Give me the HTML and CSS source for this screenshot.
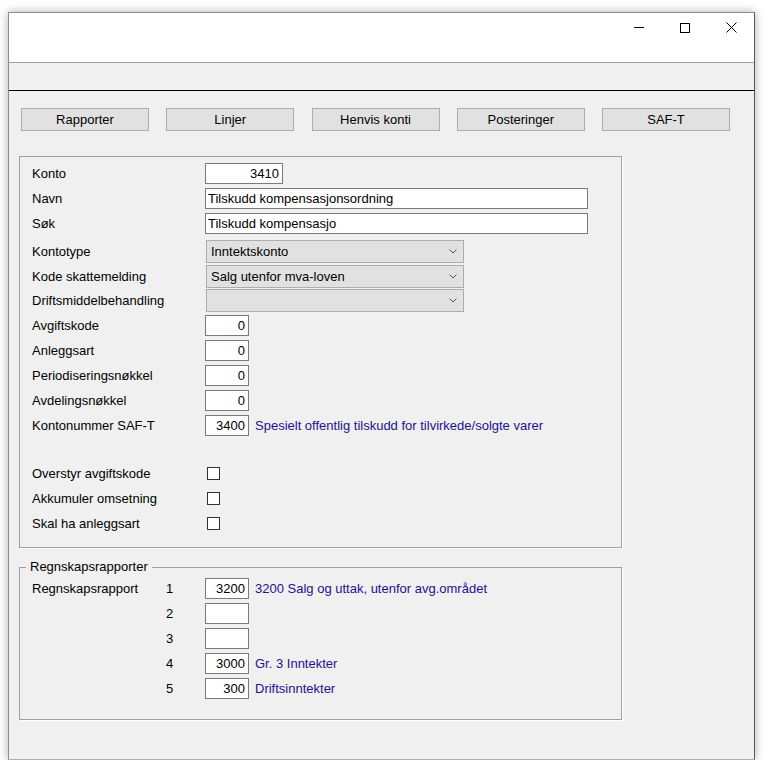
FILE: index.html
```html
<!DOCTYPE html>
<html lang="no">
<head>
<meta charset="utf-8">
<title>Konto</title>
<link rel="stylesheet" href="styles.css">
</head>
<body>
<div class="window">
  <div class="titlebar">
    <div class="cap-btn"><svg width="10" height="10" viewBox="0 0 10 10"><line x1="0" y1="4.5" x2="10" y2="4.5" stroke="#000" stroke-width="1"/></svg></div>
    <div class="cap-btn"><svg width="10" height="10" viewBox="0 0 10 10"><rect x="0.5" y="0.5" width="9" height="9" fill="none" stroke="#000" stroke-width="1"/></svg></div>
    <div class="cap-btn"><svg width="11" height="11" viewBox="0 0 11 11"><path d="M0.5 0.5 L10.5 10.5 M10.5 0.5 L0.5 10.5" stroke="#000" stroke-width="1" fill="none"/></svg></div>
  </div>
  <div class="menubar"></div>
  <div class="client">
    <div class="toolbar">
      <div class="btn">Rapporter</div>
      <div class="btn">Linjer</div>
      <div class="btn">Henvis konti</div>
      <div class="btn">Posteringer</div>
      <div class="btn">SAF-T</div>
    </div>

    <div class="group main">
      <div class="row"><span class="lbl">Konto</span><span class="field num w-konto">3410</span></div>
      <div class="row"><span class="lbl">Navn</span><span class="field w-wide">Tilskudd kompensasjonsordning</span></div>
      <div class="row"><span class="lbl">Søk</span><span class="field w-wide">Tilskudd kompensasjo</span></div>
      <div class="row sel first-sel"><span class="lbl">Kontotype</span><span class="select"><span class="sel-text">Inntektskonto</span><svg class="chev" width="8" height="5" viewBox="0 0 8 5"><polyline points="0.5,0.5 4,4 7.5,0.5" fill="none" stroke="#555" stroke-width="1"/></svg></span></div>
      <div class="row sel sel2"><span class="lbl">Kode skattemelding</span><span class="select"><span class="sel-text">Salg utenfor mva-loven</span><svg class="chev" width="8" height="5" viewBox="0 0 8 5"><polyline points="0.5,0.5 4,4 7.5,0.5" fill="none" stroke="#555" stroke-width="1"/></svg></span></div>
      <div class="row sel sel3"><span class="lbl">Driftsmiddelbehandling</span><span class="select"><span class="sel-text"></span><svg class="chev" width="8" height="5" viewBox="0 0 8 5"><polyline points="0.5,0.5 4,4 7.5,0.5" fill="none" stroke="#555" stroke-width="1"/></svg></span></div>
      <div class="row after-sel"><span class="lbl">Avgiftskode</span><span class="field num w-small">0</span></div>
      <div class="row"><span class="lbl">Anleggsart</span><span class="field num w-small">0</span></div>
      <div class="row"><span class="lbl">Periodiseringsnøkkel</span><span class="field num w-small">0</span></div>
      <div class="row"><span class="lbl">Avdelingsnøkkel</span><span class="field num w-small">0</span></div>
      <div class="row"><span class="lbl">Kontonummer SAF-T</span><span class="field num w-small">3400</span><span class="desc">Spesielt offentlig tilskudd for tilvirkede/solgte varer</span></div>
      <div class="row check first-check"><span class="lbl">Overstyr avgiftskode</span><span class="cb"></span></div>
      <div class="row check"><span class="lbl">Akkumuler omsetning</span><span class="cb"></span></div>
      <div class="row check"><span class="lbl">Skal ha anleggsart</span><span class="cb"></span></div>
    </div>

    <fieldset class="group reports">
      <legend>Regnskapsrapporter</legend>
      <div class="row"><span class="lbl-r">Regnskapsrapport</span><span class="nr">1</span><span class="field num w-small">3200</span><span class="desc">3200 Salg og uttak, utenfor avg.området</span></div>
      <div class="row"><span class="lbl-r"></span><span class="nr">2</span><span class="field num w-small"></span></div>
      <div class="row"><span class="lbl-r"></span><span class="nr">3</span><span class="field num w-small"></span></div>
      <div class="row"><span class="lbl-r"></span><span class="nr">4</span><span class="field num w-small">3000</span><span class="desc">Gr. 3 Inntekter</span></div>
      <div class="row"><span class="lbl-r"></span><span class="nr">5</span><span class="field num w-small">300</span><span class="desc">Driftsinntekter</span></div>
    </fieldset>
  </div>
</div>
</body>
</html>
```

FILE: styles.css
```css
body {
  margin: 0;
  background: #fff;
  font-family: "Liberation Sans", Arial, sans-serif;
  font-size: 13px;
  color: #000;
}

.window {
  box-sizing: border-box;
  width: 747px;
  height: 748px;
  margin: 12px 0 0 8px;
  border: 1px solid #8c8c8c;
  border-right-color: #5a5a5a;
  border-bottom-color: #b0b0b0;
  background: #f0f0f0;
  box-shadow: 0 0 9px rgba(0, 0, 0, 0.32);
  display: flex;
  flex-direction: column;
}

.titlebar {
  height: 49px;
  background: #fff;
  border-bottom: 1px solid #a0a0a0;
  display: flex;
  justify-content: flex-end;
  align-items: flex-start;
}

.cap-btn {
  width: 46px;
  height: 29px;
  display: flex;
  align-items: center;
  justify-content: center;
}

.cap-btn svg { display: block; }

.menubar {
  height: 27px;
  border-bottom: 1px solid #000;
}

.client { flex: 1; }

.toolbar {
  display: flex;
  gap: 17.25px;
  padding: 17px 0 0 12px;
}

.btn {
  box-sizing: border-box;
  width: 128px;
  height: 23px;
  background: #e1e1e1;
  border: 1px solid #adadad;
  display: flex;
  align-items: center;
  justify-content: center;
}

.group {
  box-sizing: border-box;
  width: 603px;
  border: 1px solid #a0a0a0;
  box-shadow: 1px 1px 0 #fff;
}

.main {
  margin: 25px 0 0 10px;
  padding: 6px 0 13px 12px;
}

.row {
  display: flex;
  align-items: center;
  height: 21px;
  margin-top: 4px;
}

.main .row:first-child,
.reports legend + .row { margin-top: 0; }

.row.sel { height: 23px; }
.row.first-sel { margin-top: 6px; }
.row.sel2 { margin-top: 2px; }
.row.sel3 { margin-top: 1px; }
.row.after-sel { margin-top: 3px; }
.row.first-check { margin-top: 27px; }

.lbl {
  width: 173px;
  flex: none;
  white-space: nowrap;
}

.field {
  box-sizing: border-box;
  height: 21px;
  line-height: 19px;
  background: #fff;
  border: 1px solid #7a7a7a;
  padding: 0 2px;
  white-space: nowrap;
  flex: none;
}

.field.num {
  text-align: right;
  padding: 0 3px 0 2px;
}

.w-konto { width: 78px; padding-right: 4px; }
.w-wide { width: 383px; }
.w-small { width: 44px; }

.select {
  box-sizing: border-box;
  width: 258px;
  height: 23px;
  background: #e1e1e1;
  border: 1px solid #adadad;
  display: flex;
  align-items: center;
  justify-content: space-between;
  padding: 0 6px 0 4px;
  margin-left: 1px;
}

.chev { display: block; flex: none; }

.desc {
  margin-left: 6px;
  color: #1c1290;
  white-space: nowrap;
}

.cb {
  box-sizing: border-box;
  width: 13px;
  height: 13px;
  border: 1px solid #333;
  background: #fff;
  margin-left: 2px;
}

.reports {
  margin: 12px 0 0 10px;
  padding: 3px 0 20px 12px;
  min-width: 0;
}

.reports legend {
  margin-left: -6px;
  padding: 0 4px 2px 4px;
  line-height: 13px;
}

.lbl-r {
  width: 134px;
  flex: none;
  white-space: nowrap;
}

.nr {
  width: 39px;
  flex: none;
}
```
